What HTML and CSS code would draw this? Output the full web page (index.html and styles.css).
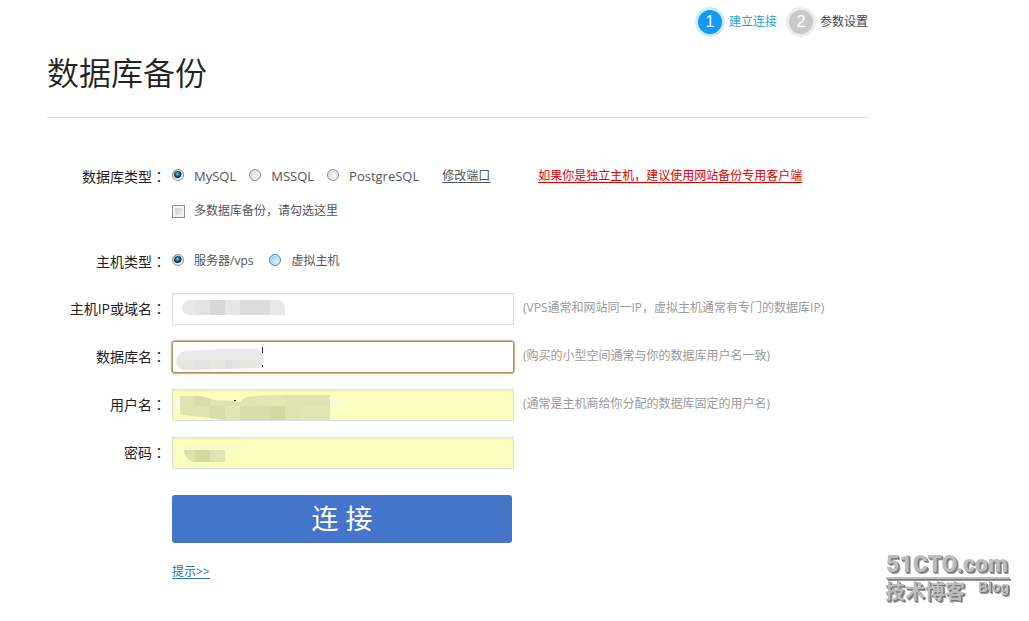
FILE: index.html
```html
<!DOCTYPE html>
<html lang="zh-CN">
<head>
<meta charset="utf-8">
<meta name="viewport" content="width=device-width, initial-scale=1">
<title>数据库备份</title>
<link rel="stylesheet" href="styles.css">
</head>
<body>
<main class="page">
  <ol class="steps">
    <li class="step step-active"><span class="step-number">1</span><span>建立连接</span></li>
    <li class="step"><span class="step-number">2</span><span>参数设置</span></li>
  </ol>
  <h1 class="title">数据库备份</h1>
  <form class="form">
    <div class="row" role="radiogroup" aria-labelledby="db-type">
      <span class="label" id="db-type">数据库类型<span class="colon" lang="zh-TW">：</span></span>
      <div class="options options-db">
        <label class="option"><input class="radio" type="radio" name="db" checked><span>MySQL</span></label>
        <label class="option"><input class="radio" type="radio" name="db"><span>MSSQL</span></label>
        <label class="option"><input class="radio" type="radio" name="db"><span>PostgreSQL</span></label>
        <a class="port-link" href="#">修改端口</a>
        <a class="client-link" href="#">如果你是独立主机，建议使用网站备份专用客户端</a>
      </div>
    </div>
    <div class="row row-multi">
      <div class="options">
        <label class="option"><input class="checkbox" type="checkbox"><span>多数据库备份，请勾选这里</span></label>
      </div>
    </div>
    <div class="row row-host" role="radiogroup" aria-labelledby="host-type">
      <span class="label" id="host-type">主机类型<span class="colon" lang="zh-TW">：</span></span>
      <div class="options">
        <label class="option"><input class="radio" type="radio" name="host" checked><span>服务器/vps</span></label>
        <label class="option"><input class="radio radio-hot" type="radio" name="host"><span>虚拟主机</span></label>
      </div>
    </div>
    <div class="row row-field">
      <label class="label" for="host">主机IP或域名<span class="colon" lang="zh-TW">：</span></label>
      <div class="field">
        <input class="input" id="host" type="text">
        <svg class="mask" width="340" height="32" viewBox="0 0 340 32" aria-hidden="true">
          <clipPath id="m1"><path d="M18 7H106Q113 8 113 15V22H18Q10 21 10 15Q11 8 18 7Z"/></clipPath>
          <g clip-path="url(#m1)"><path fill="#e7e7e7" d="M8 6h110v18H8z"/><path fill="#e2e2e4" d="M23 6h15v18H23z"/><path fill="#d8d6d8" d="M38 6h15v18H38z"/><path fill="#e5e5e7" d="M53 6h15v18H53z"/><path fill="#dcdcde" d="M68 6h30v18H68z"/></g>
        </svg>
      </div>
      <span class="hint">(VPS通常和网站同一IP，虚拟主机通常有专门的数据库IP)</span>
    </div>
    <div class="row row-field">
      <label class="label" for="dbname">数据库名<span class="colon" lang="zh-TW">：</span></label>
      <div class="field">
        <input class="input input-focus" id="dbname" type="text">
        <svg class="mask" width="340" height="32" viewBox="0 0 340 32" aria-hidden="true">
          <clipPath id="m2"><path d="M14 10L50 8H85Q92 11 92 19Q91 27 84 27L45 28L12 29Q4 27 4 20Q5 11 14 10Z"/></clipPath>
          <g clip-path="url(#m2)"><path fill="#e9e9ea" d="M0 6h95v26H0z"/><path fill="#e8e6e1" d="M8 19h15v12H8zM38 19h15v12H38zM68 19h27v12H68z"/><path fill="#e1e1df" d="M23 19h15v12H23zM53 19h15v12H53z"/></g>
          <path fill="#222" d="M90 6h1v6h-1zM90 24h1v2h-1z"/>
        </svg>
      </div>
      <span class="hint">(购买的小型空间通常与你的数据库用户名一致)</span>
    </div>
    <div class="row row-field">
      <label class="label" for="user">用户名<span class="colon" lang="zh-TW">：</span></label>
      <div class="field">
        <input class="input input-filled" id="user" type="text">
        <svg class="mask" width="340" height="32" viewBox="0 0 340 32" aria-hidden="true">
          <path fill="#fafbd6" d="M3 11Q2 16 5 22L8 25V8ZM158 7Q169 8 171 16L158 20Z"/>
          <clipPath id="m3"><path d="M8 7H29L42 11L62 12L68 13Q72 7 84 7L110 6H158V31H55L28 28L12 26L8 25Z"/></clipPath>
          <g clip-path="url(#m3)"><path fill="#dfe3af" d="M8 5h150v26H8z"/><path fill="#d9dca8" d="M23 7h15v10H23zM38 17h15v14H38zM68 17h30v14H68z"/><path fill="#e2e5b4" d="M53 17h15v14H53zM83 6h30v10H83zM128 17h30v14h-30z"/><path fill="#d4d7a2" d="M98 17h15v14H98z"/></g>
          <path fill="#222" d="M62 11h2v1h-2z"/>
        </svg>
      </div>
      <span class="hint">(通常是主机商给你分配的数据库固定的用户名)</span>
    </div>
    <div class="row row-field">
      <label class="label" for="password">密码<span class="colon" lang="zh-TW">：</span></label>
      <div class="field">
        <input class="input input-filled" id="password" type="password">
        <svg class="mask" width="340" height="32" viewBox="0 0 340 32" aria-hidden="true">
          <path fill="#f6fbc8" d="M14 7H66Q72 8 72 12H12Z"/>
          <path fill="#dde0ad" d="M12 13H53V25H20Q12 21 12 13Z"/><path fill="#d6d8a2" d="M23 13h15v12H23z"/><path fill="#e1e4b2" d="M38 13h15v12H38z"/>
        </svg>
      </div>
    </div>
    <div class="actions">
      <button class="submit" type="button">连 接</button>
      <a class="tips" href="#">提示&gt;&gt;</a>
    </div>
  </form>
</main>
<svg class="watermark" width="130" height="62" viewBox="0 0 130 62" role="img" aria-label="51CTO.com 技术博客 Blog">
  <text class="mark-name" x="1" y="25">51CTO.com</text>
  <path d="M1 30h123v2H1z"/>
  <text class="mark-cn" x="0" y="52">技术博客</text>
  <text class="mark-blog" x="93" y="45">Blog</text>
</svg>
</body>
</html>
```
FILE: styles.css
```css
* { box-sizing: border-box; }

body {
  position: relative;
  min-height: 100vh;
  margin: 0;
  background: #fff;
  color: #555;
  font: 12px/20px "Open Sans", "Noto Sans CJK SC", sans-serif;
}

.page {
  max-width: 868px;
  padding: 7px 0 32px 47px;
}

.steps {
  display: flex;
  justify-content: flex-end;
  gap: 9px;
  margin: 0;
  padding: 0;
  list-style: none;
}

.step {
  display: flex;
  align-items: center;
  gap: 4px;
  color: #444;
}

.step-active { color: #2a9fd0; }

.step-number {
  width: 30px;
  height: 30px;
  border: 3px solid #ececec;
  border-radius: 50%;
  background: #c9c9c9;
  color: #fff;
  font: 16px/24px "Liberation Sans", sans-serif;
  text-align: center;
}

.step-active .step-number {
  border-color: #cdeafb;
  background: #0f9af5;
}

.title {
  margin: 0;
  padding: 12px 0 20px;
  border-bottom: 1px solid #ddd;
  color: #222;
  font-size: 32px;
  font-weight: 350;
  line-height: 48px;
}

.form { padding-top: 42px; }

.row {
  display: flex;
  align-items: center;
  gap: 6px;
  min-height: 32px;
}

.label {
  flex: none;
  width: 119px;
  color: #222;
  font-size: 14px;
  text-align: right;
}

.colon { font-family: "Noto Sans CJK TC", sans-serif; }

.options {
  display: flex;
  align-items: center;
  gap: 16px;
}

.options-db { gap: 13px; }

.options-db .option { font-size: 13px; }

.option {
  display: flex;
  align-items: center;
  gap: 10px;
}

.row-multi {
  margin-top: 3px;
  padding-left: 125px;
}

.row-host { margin-top: 18px; }

.row-field { margin-top: 16px; }

.row-field .label { padding-bottom: 2px; }

.radio,
.checkbox {
  flex: none;
  width: 12px;
  height: 12px;
  margin: 0 0 3px;
  border: 1px solid #8e8f8f;
  appearance: none;
}

.radio {
  border-radius: 50%;
  background: radial-gradient(circle at 60% 60%, #fff, #d4d4d4 70%);
  box-shadow: inset 0 0 0 1px #eee;
}

.radio:checked {
  background: radial-gradient(circle at 45% 40%, #8fd0ee 0, #176391 25%, #0c2f4a 46%, #e6eef2 54%);
}

.radio-hot {
  border-color: #5586a3;
  background: radial-gradient(circle at 65% 65%, #e0f4fd, #86c8ea 75%);
  box-shadow: inset 0 0 0 1px #d3effc;
}

.checkbox {
  width: 13px;
  height: 13px;
  margin: 0 -1px 0 0;
  background: linear-gradient(135deg, #c4c8cc, #f4f4f4);
  box-shadow: inset 0 0 0 2px #f2f2f2;
}

a { text-underline-offset: 2px; }

.port-link {
  margin-left: 10px;
  color: #555;
}

.client-link {
  margin-left: 35px;
  color: #d00;
}

.field {
  position: relative;
  flex: 0 1 342px;
}

.input {
  display: block;
  width: 100%;
  height: 32px;
  padding: 0 8px;
  border: 1px solid #ddd;
  background: #fff;
  box-shadow: inset 0 1px 2px #eee;
  font: inherit;
}

.input-focus {
  border-color: #a8935a;
  border-radius: 2px;
  outline: 1px solid #c9b98c;
  box-shadow: 0 0 6px #d5e4e8;
}

.input-filled {
  background: #faffbd;
  box-shadow: inset 0 1px 2px #e8edb5;
}

.mask {
  position: absolute;
  top: 0;
  left: 0;
  pointer-events: none;
}

.hint {
  margin: 0 0 3px 3px;
  color: #999;
}

.actions {
  display: flex;
  flex-direction: column;
  align-items: flex-start;
  gap: 19px;
  padding: 26px 0 0 125px;
}

.submit {
  width: 100%;
  max-width: 340px;
  height: 48px;
  padding: 0;
  border: 0;
  border-radius: 3px;
  background: #4475cb;
  color: #fff;
  font: 27px/48px "Open Sans", "Noto Sans CJK SC", sans-serif;
}

.tips { color: #2a72b5; }

.watermark {
  position: absolute;
  right: 14px;
  bottom: 12px;
  fill: #bdbdbd;
  filter: drop-shadow(1px 1px 0 #777) drop-shadow(1px 1px 0 #999);
}

.mark-name { font: 900 23px Roboto, "Liberation Sans", sans-serif; }
.mark-cn { font: bold 20px "Noto Sans CJK SC", sans-serif; }
.mark-blog { font: bold 14px "Liberation Sans", sans-serif; }
```
